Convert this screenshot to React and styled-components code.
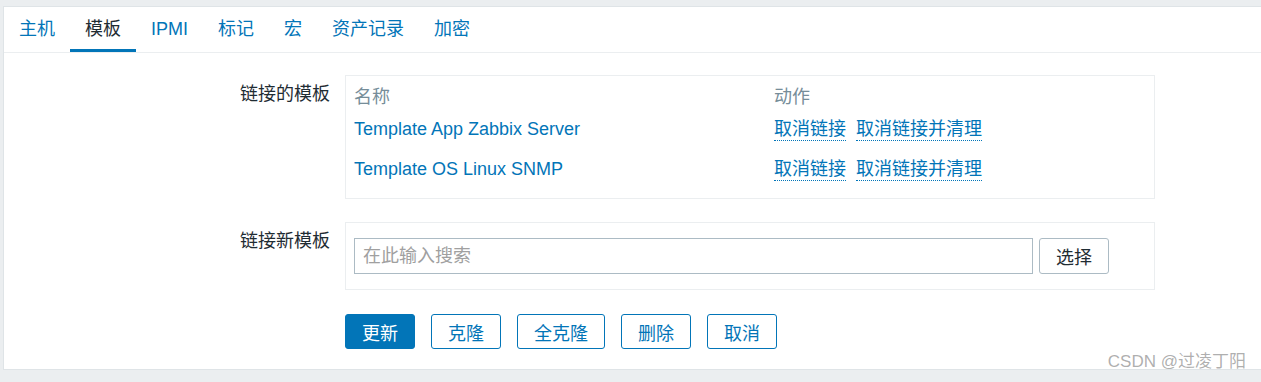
import React from 'react';
import styled, { createGlobalStyle } from 'styled-components';

const GlobalStyle = createGlobalStyle`
    html, body {
        margin: 0;
        padding: 0;
        background: #ebeef0;
    }
    body {
        font-family: "Liberation Sans", "Noto Sans CJK SC", sans-serif;
        font-size: 18px;
        color: #1f2c33;
    }
`;

const Page = styled.div`
    padding: 6px 0 0 3px;
    height: 382px;
    box-sizing: border-box;
    position: relative;
`;

const Panel = styled.div`
    background: #fff;
    border: 1px solid #dfe4e7;
    border-right: none;
    height: 364px;
    box-sizing: border-box;
`;

const Tabs = styled.ul`
    display: flex;
    list-style: none;
    margin: 0;
    padding: 0;
    border-bottom: 1px solid #ebeef0;
`;

const Tab = styled.li`
    padding: 11px 15px 9px;
    line-height: 22px;
    color: ${p => (p.active ? '#1f2c33' : '#0275b8')};
    border-bottom: 3px solid ${p => (p.active ? '#0275b8' : 'transparent')};
    cursor: pointer;
`;

const Form = styled.div`
    padding-top: 22px;
    display: grid;
    grid-template-columns: 326px 810px;
    column-gap: 15px;
    row-gap: 23px;
`;

const Label = styled.div`
    text-align: right;
    padding-top: 8px;
    line-height: 22px;
`;

const FieldBox = styled.div`
    border: 1px solid #ebeef0;
    padding: ${p => (p.tall ? '15px 8px' : '6px 8px 10px')};
`;

const Table = styled.table`
    width: 100%;
    border-collapse: collapse;
    th, td {
        padding: 0;
        text-align: left;
        vertical-align: middle;
        font-weight: normal;
        box-sizing: border-box;
    }
    th {
        height: 26px;
        color: #768d99;
    }
    td {
        height: 40px;
        padding-top: 2px;
    }
`;

const NameCol = styled.th`
    width: 420px;
`;

const TemplateLink = styled.a`
    color: #0275b8;
    text-decoration: none;
`;

const Actions = styled.div`
    display: flex;
    gap: 10px;
`;

const ActionLink = styled.a`
    color: #0275b8;
    text-decoration: none;
    border-bottom: 1px dotted #0275b8;
    line-height: 22px;
`;

const SearchRow = styled.div`
    display: flex;
    gap: 6px;
`;

const SearchInput = styled.input`
    width: 679px;
    height: 36px;
    box-sizing: border-box;
    border: 1px solid #acbbc4;
    padding: 0 8px;
    font: inherit;
    color: #1f2c33;
    outline: none;
    &::placeholder {
        color: #a0a0a0;
    }
`;

const SelectButton = styled.button`
    width: 70px;
    height: 36px;
    box-sizing: border-box;
    border: 1px solid #acbbc4;
    border-radius: 3px;
    background: #fff;
    font: inherit;
    color: #1f2c33;
    padding: 0;
`;

const ButtonRow = styled.div`
    grid-column: 2;
    display: flex;
    gap: 16px;
    margin-top: 1px;
`;

const Button = styled.button`
    height: 35px;
    box-sizing: border-box;
    padding: 0 16px;
    border: 1px solid #0275b8;
    border-radius: 3px;
    background: ${p => (p.primary ? '#0275b8' : '#fff')};
    color: ${p => (p.primary ? '#fff' : '#0275b8')};
    font: inherit;
    min-width: 70px;
`;

const Watermark = styled.div`
    position: absolute;
    right: 15px;
    bottom: 10px;
    font-size: 17px;
    color: rgba(140, 140, 140, 0.7);
`;

const tabs = ['主机', '模板', 'IPMI', '标记', '宏', '资产记录', '加密'];

const linked = ['Template App Zabbix Server', 'Template OS Linux SNMP'];

const buttons = [
    { label: '更新', primary: true },
    { label: '克隆' },
    { label: '全克隆' },
    { label: '删除' },
    { label: '取消' },
];

function App() {
    return (
        <Page>
            <GlobalStyle />
            <Panel>
                <Tabs>
                    {tabs.map((t, i) => (
                        <Tab key={i} active={t === '模板'}>{t}</Tab>
                    ))}
                </Tabs>
                <Form>
                    <Label>链接的模板</Label>
                    <FieldBox>
                        <Table>
                            <thead>
                                <tr>
                                    <NameCol>名称</NameCol>
                                    <th>动作</th>
                                </tr>
                            </thead>
                            <tbody>
                                {linked.map((name, i) => (
                                    <tr key={i}>
                                        <td><TemplateLink>{name}</TemplateLink></td>
                                        <td>
                                            <Actions>
                                                <ActionLink>取消链接</ActionLink>
                                                <ActionLink>取消链接并清理</ActionLink>
                                            </Actions>
                                        </td>
                                    </tr>
                                ))}
                            </tbody>
                        </Table>
                    </FieldBox>

                    <Label>链接新模板</Label>
                    <FieldBox tall>
                        <SearchRow>
                            <SearchInput placeholder="在此输入搜索" />
                            <SelectButton>选择</SelectButton>
                        </SearchRow>
                    </FieldBox>

                    <ButtonRow>
                        {buttons.map((b, i) => (
                            <Button key={i} primary={b.primary}>{b.label}</Button>
                        ))}
                    </ButtonRow>
                </Form>
            </Panel>
            <Watermark>CSDN @过凌丁阳</Watermark>
        </Page>
    );
}

export default App;
